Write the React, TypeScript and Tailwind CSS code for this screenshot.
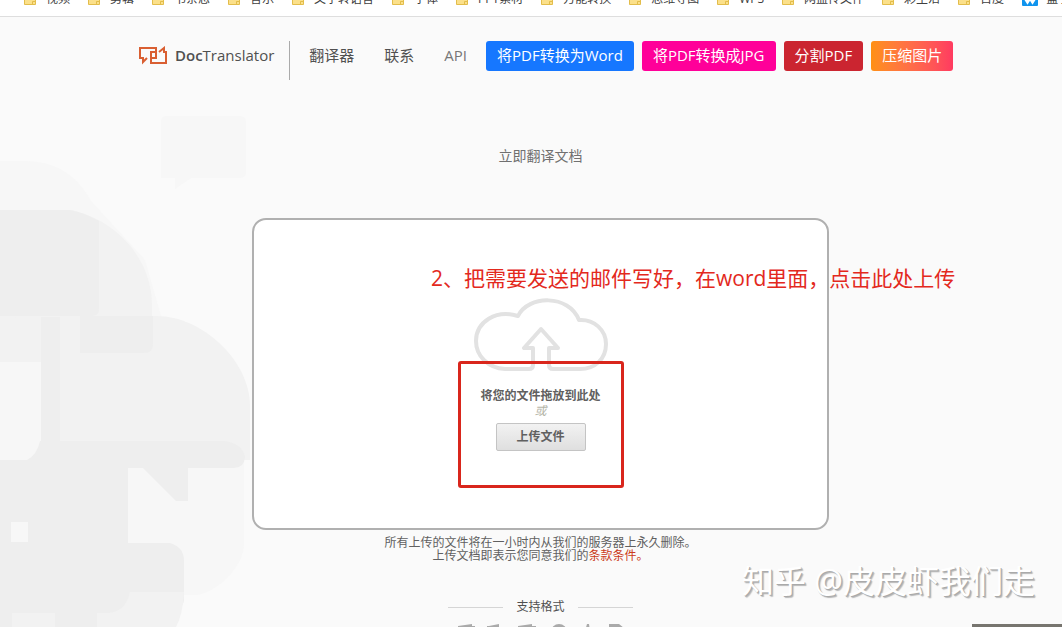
import React from "react";

const bookmarks = [
  "视频",
  "剪辑",
  "书亲恋",
  "音乐",
  "文字转语音",
  "字体",
  "PPT素材",
  "万能转换",
  "思维导图",
  "WPS",
  "网盘传文件",
  "彩生活",
  "百度",
];

const tools = [
  { label: "将PDF转换为Word", color: "bg-[#1677ff]" },
  { label: "将PDF转换成JPG", color: "bg-[#ff0099]" },
  { label: "分割PDF", color: "bg-[#cb2530]" },
  { label: "压缩图片", color: "bg-linear-to-r from-[#ff9010] to-[#ff3a60]" },
];

function FolderIcon() {
  return (
    <svg width="12" height="12" viewBox="0 0 12 12" aria-hidden="true">
      <path d="M.5.5h11v11H.5z" fill="#fbe08a" stroke="#e3bd4b" />
      <path d="M8.5 11V8.5h3" fill="none" stroke="#e3bd4b" />
    </svg>
  );
}

function BookmarkBar() {
  return (
    <nav aria-label="书签" className="h-[17px] overflow-hidden border-b border-[#dedede] bg-white">
      <ul className="-mt-[9px] flex gap-[18px] whitespace-nowrap text-[12px] leading-4 text-[#404040]">
        <li className="-ml-2">
          <a href="#bookmark" className="block w-[14px]">个</a>
        </li>
        {bookmarks.map((name) => (
          <li key={name}>
            <a href="#bookmark" className="flex items-center gap-[10px]">
              <FolderIcon />
              {name}
            </a>
          </li>
        ))}
        <li>
          <a href="#bookmark" className="flex items-center gap-2">
            <svg width="16" height="14" viewBox="0 0 16 14" aria-hidden="true">
              <rect width="16" height="14" rx="1" fill="#1094ee" />
              <path d="M3 6l2.500 4L8 6l2.500 4L13 6" fill="none" stroke="#fff" strokeWidth="3" />
            </svg>
            盒子
          </a>
        </li>
      </ul>
    </nav>
  );
}

function Logo() {
  return (
    <svg width="29" height="19" viewBox="0 0 29 19" fill="none" stroke="#d95f32" strokeWidth="2" aria-hidden="true">
      <path d="M12.500 12H17V2H1v10h3v4l4-4" />
      <path d="M16 6h-4v11h15V6h-2V2l-5 4" />
    </svg>
  );
}

function Header() {
  return (
    <header className="flex items-start pt-6 pl-[139px] whitespace-nowrap">
      <a href="#home" className="flex h-7 items-center gap-[7px] text-[15px] text-[#505050]">
        <Logo />
        <span>
          <span className="font-semibold">Doc</span>Translator
        </span>
      </a>
      <nav className="ml-[15px] flex h-[39px] items-start border-l border-[#aaaaaa] pl-[19px] text-[15px] text-[#505050]">
        <ul className="flex h-7 items-center gap-[30px]">
          <li><a href="#translator">翻译器</a></li>
          <li><a href="#contact">联系</a></li>
          <li><a href="#api" className="text-[#777777]">API</a></li>
        </ul>
      </nav>
      <ul className="ml-[19px] flex gap-2 text-[15px] text-white">
        {tools.map((tool) => (
          <li key={tool.label}>
            <a href="#tool" className={`flex h-[30px] items-center rounded-[3px] px-[11px] pb-[2px] ${tool.color}`}>
              {tool.label}
            </a>
          </li>
        ))}
      </ul>
    </header>
  );
}

function Backdrop() {
  return (
    <svg className="absolute top-[100px] left-0" width="260" height="527" viewBox="0 100 260 527" aria-hidden="true">
      <path d="M166 116h74q6 0 6 6v50q0 6-6 6h-49l-16 11v-11h-14v-56q0-6 5-6z" fill="#f7f7f7" />
      <path d="M0 161h25c30 0 52 14 66 40l54 59 46 160 53 30v95c0 18-22 45-46 50H0z" fill="#f7f7f7" />
      <path d="M0 210h70c43 8 82 47 82 95v38q0 10-11 10H0z" fill="#f2f2f2" />
      <path d="M42 316h115c44 0 93 44 93 90v54H42z" fill="#f2f2f2" />
      <path d="M0 210h70q15 3 29 11v88q0 7-7 7H0z" fill="#eeeeee" />
      <path d="M80 316h73v28q0 9-9 9H80z" fill="#eeeeee" />
      <path d="M0 330q6-13 20-13h22v45H0z" fill="#f2f2f2" />
      <path d="M41 317h19v125H41z" fill="#eeeeee" />
      <path d="M0 372q8-1 12-10h28v80q0 9-13 18H0z" fill="#f7f7f7" />
      <path d="M27 460q10-5 13-19h184q18 2 21 16-1 11-11 11h-46v33h-12l-33-33h-15v75h42q14 4 14 18v40q-4 10-10 26H0V460z" fill="#eeeeee" />
      <path d="M11 522h17v20H11z" fill="#f7f7f7" />
      <path d="M130 592h54q-1 22-8 35H97v-14h12q17-2 21-21zM12 613h43v14H12z" fill="#f2f2f2" />
    </svg>
  );
}

function CloudIcon() {
  return (
    <svg width="134" height="74" viewBox="0 0 134 74" fill="none" stroke="#e2e2e2" strokeWidth="4" strokeLinejoin="round" aria-hidden="true">
      <path d="M59 50v17q0 4-4 4H31C14 70 2 58 2 43 2 24 22 11 44 18 54-3 95-4 105 22c15-1 27 10 27 24 0 15-11 25-26 25H79q-4 0-4-4V50h9L67 31 50 50z" />
    </svg>
  );
}

function UploadCard() {
  return (
    <section className="relative flex h-[312px] w-[577px] flex-col items-center rounded-[14px] border-2 border-[#b0b0b0] bg-white pt-[78px] text-[12px] text-[#606060]">
      <CloudIcon />
      <p className="mt-4 leading-4 font-bold">将您的文件拖放到此处</p>
      <p className="leading-[14px] text-[#b5b5a8] italic">或</p>
      <button
        type="button"
        className="mt-[5px] h-7 w-[90px] rounded-[2px] border border-[#c4c4c4] bg-linear-to-b from-[#f2f2f2] to-[#dfdfdf] font-bold"
      >
        上传文件
      </button>
      <div className="absolute top-[141px] left-[204px] h-[127px] w-[166px] rounded-[3px] border-3 border-[#d9261c]" />
      <p className="absolute top-[43px] left-[177px] text-[21px] leading-[30px] whitespace-nowrap text-[#e3291d]">
        2、把需要发送的邮件写好，在word里面，点击此处上传
      </p>
    </section>
  );
}

function FormatIcons() {
  return (
    <svg className="mt-[9px]" width="168" height="16" viewBox="0 0 168 16" fill="#aaaaaa" aria-hidden="true">
      <path d="M1 2l14-2v2h3v12H1zM32 2l10-2v16H30V2zM61 2l14-2v2h4v12H61z" />
      <circle cx="102" cy="8" r="8" />
      <path d="M130 0h2l1 7 7 7-10-3-8 4 6-8zM152 0h10l5 4v12h-15z" />
    </svg>
  );
}

export default function App() {
  return (
    <div className="relative h-screen overflow-hidden bg-[#fafafa] font-['Open_Sans','Noto_Sans_CJK_SC',sans-serif]">
      <Backdrop />
      <div className="relative">
        <BookmarkBar />
        <Header />
        <main className="flex flex-col items-center pl-[19px]">
          <h1 className="mt-[66px] text-[14px] leading-5 text-[#707070]">立即翻译文档</h1>
          <div className="mt-[52px]">
            <UploadCard />
          </div>
          <div className="mt-[6px] text-center text-[12px] leading-[13px] text-[#606060]">
            <p>所有上传的文件将在一小时内从我们的服务器上永久删除。</p>
            <p>
              上传文档即表示您同意我们的
              <a href="#terms" className="text-[#cb3b20]">条款条件。</a>
            </p>
          </div>
          <h2 className="mt-[37px] flex items-center gap-[13px] text-[12px] leading-4 text-[#505050]">
            <span className="h-px w-[55px] bg-[#d5d5d5]" />
            支持格式
            <span className="h-px w-[55px] bg-[#d5d5d5]" />
          </h2>
          <FormatIcons />
        </main>
      </div>
      <p className="absolute right-[27px] bottom-[26px] text-[32px] leading-10 whitespace-nowrap text-white [text-shadow:1px_1px_0_#aaaaaa,2px_2px_1px_#b8b8b8]">
        知乎 @皮皮虾我们走
      </p>
      <div className="absolute right-0 bottom-0 h-[3px] w-[90px] bg-[#77756f]" />
    </div>
  );
}
